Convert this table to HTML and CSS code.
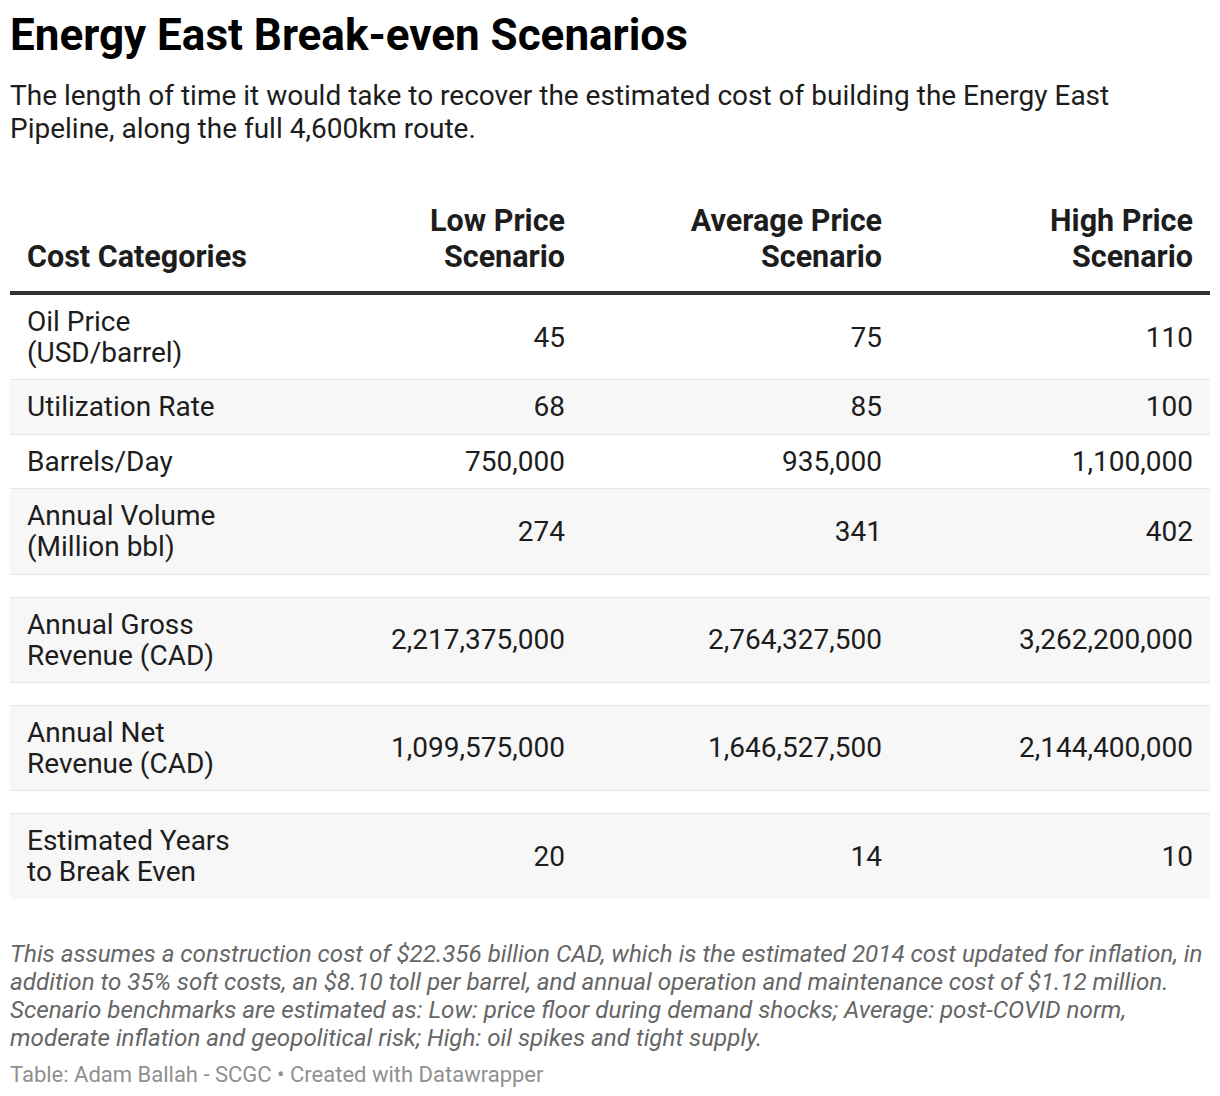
FILE: index.html
```html
<!DOCTYPE html>
<html lang="en">
<head>
<meta charset="utf-8">
<title>Energy East Break-even Scenarios</title>
<link rel="stylesheet" href="styles.css">
</head>
<body>
<div class="chart">
  <h1 class="title">Energy East Break-even Scenarios</h1>
  <p class="desc">The length of time it would take to recover the estimated cost of building the Energy East Pipeline, along the full 4,600km route.</p>
  <table class="tbl">
    <colgroup>
      <col class="c1"><col class="c2"><col class="c3"><col class="c4">
    </colgroup>
    <thead>
      <tr>
        <th class="lft">Cost Categories</th>
        <th>Low Price<br>Scenario</th>
        <th>Average Price<br>Scenario</th>
        <th>High Price<br>Scenario</th>
      </tr>
    </thead>
    <tbody>
      <tr><td class="lft">Oil Price<br>(USD/barrel)</td><td>45</td><td>75</td><td>110</td></tr>
      <tr class="alt"><td class="lft">Utilization Rate</td><td>68</td><td>85</td><td>100</td></tr>
      <tr><td class="lft">Barrels/Day</td><td>750,000</td><td>935,000</td><td>1,100,000</td></tr>
      <tr class="alt"><td class="lft">Annual Volume<br>(Million bbl)</td><td>274</td><td>341</td><td>402</td></tr>
      <tr class="blank"><td></td><td></td><td></td><td></td></tr>
      <tr class="alt"><td class="lft">Annual Gross<br>Revenue (CAD)</td><td>2,217,375,000</td><td>2,764,327,500</td><td>3,262,200,000</td></tr>
      <tr class="blank"><td></td><td></td><td></td><td></td></tr>
      <tr class="alt"><td class="lft">Annual Net<br>Revenue (CAD)</td><td>1,099,575,000</td><td>1,646,527,500</td><td>2,144,400,000</td></tr>
      <tr class="blank"><td></td><td></td><td></td><td></td></tr>
      <tr class="alt last"><td class="lft">Estimated Years<br>to Break Even</td><td>20</td><td>14</td><td>10</td></tr>
    </tbody>
  </table>
  <p class="notes">This assumes a construction cost of $22.356 billion CAD, which is the estimated 2014 cost updated for inflation, in addition to 35% soft costs, an $8.10 toll per barrel, and annual operation and maintenance cost of $1.12 million. Scenario benchmarks are estimated as: Low: price floor during demand shocks; Average: post-COVID norm, moderate inflation and geopolitical risk; High: oil spikes and tight supply.</p>
  <p class="source">Table: Adam Ballah - SCGC • Created with Datawrapper</p>
</div>
</body>
</html>
```
FILE: styles.css
```css
html, body {
  margin: 0;
  padding: 0;
  background: #ffffff;
}
body {
  font-family: Roboto, "Liberation Sans", sans-serif;
  color: #1d1d1d;
}
.chart {
  padding: 9px 10px 0 10px;
}
.title {
  margin: 0;
  font-size: 44px;
  font-weight: 700;
  line-height: 52px;
  color: #000;
}
.desc {
  margin: 18px 0 0 0;
  font-size: 28px;
  line-height: 33px;
  color: #1d1d1d;
}
.tbl {
  margin-top: 58px;
  width: 1200px;
  border-collapse: collapse;
  table-layout: fixed;
}
.c1 { width: 259px; }
.c2 { width: 313px; }
.c3 { width: 317px; }
.c4 { width: 311px; }
.tbl th {
  font-size: 30.5px;
  font-weight: 700;
  line-height: 36px;
  text-align: right;
  vertical-align: bottom;
  padding: 0 17px 16px 17px;
  border-bottom: 4px solid #333;
  color: #1d1d1d;
}
.tbl td {
  font-size: 28px;
  line-height: 31px;
  text-align: right;
  vertical-align: middle;
  padding: 11px 17px 11.4px 17px;
  border-bottom: 1px solid #e6e6e6;
  color: #1d1d1d;
}
.tbl .lft { text-align: left; }
.tbl tr.alt td { background: #f7f7f7; }
.tbl tr.blank td { height: 22px; padding: 0; }
.tbl tr.last td { border-bottom: none; }
.notes {
  margin: 41px 0 0 0;
  font-size: 24.2px;
  line-height: 28px;
  font-style: italic;
  color: #666;
}
.source {
  margin: 10px 0 0 0;
  font-size: 22px;
  line-height: 26px;
  color: #909090;
}
```
